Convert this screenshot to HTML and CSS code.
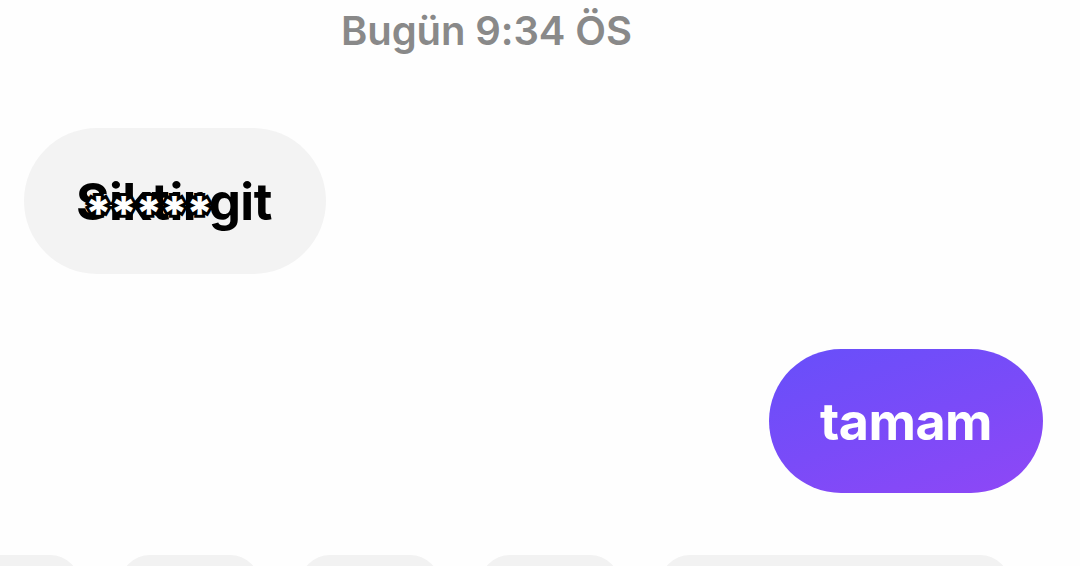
FILE: index.html
```html
<!DOCTYPE html>
<html lang="tr">
<head>
<meta charset="utf-8">
<link rel="stylesheet" href="styles.css">
</head>
<body>
<div class="chat">
  <div class="stamp">Bugün 9:34 ÖS</div>
  <div class="row row-in">
    <div class="bubble in">
      <span class="censor-wrap"><span class="orig">Siktir git</span><span class="stars">*****</span></span>
    </div>
  </div>
  <div class="row row-out">
    <div class="bubble out">tamam</div>
  </div>
  <div class="chips">
    <div class="chip c1"></div>
    <div class="chip c2"></div>
    <div class="chip c3"></div>
    <div class="chip c4"></div>
    <div class="chip c5"></div>
  </div>
</div>
</body>
</html>
```
FILE: styles.css
```css
html, body {
  margin: 0;
  padding: 0;
  background: #fefefe;
  width: 1080px;
  height: 566px;
  overflow: hidden;
}
.chat {
  display: flex;
  flex-direction: column;
  font-family: Inter, "Noto Sans", sans-serif;
  height: 566px;
  overflow: hidden;
}
.stamp {
  padding-left: 341px;
  margin-top: 7px;
  font-size: 40px;
  font-weight: 600;
  color: #898989;
  line-height: 48px;
  letter-spacing: -0.1px;
}
.row {
  display: flex;
  flex: none;
}
.row-in {
  margin-top: 73px;
  padding-left: 24px;
}
.row-out {
  margin-top: 75px;
  justify-content: flex-end;
  padding-right: 37px;
}
.bubble {
  height: 146px;
  border-radius: 73px;
  display: flex;
  align-items: center;
  font-size: 52px;
  font-weight: 700;
  letter-spacing: -0.5px;
}
.in {
  background: #f3f3f3;
  color: #000;
  width: 302px;
  box-sizing: border-box;
  padding-left: 52px;
  font-size: 51px;
  word-spacing: -6px;
}
.out {
  height: 144px;
  border-radius: 72px;
  width: 274px;
  justify-content: center;
  color: #fff;
  background: linear-gradient(160deg, #674ffa 0%, #7a4bf8 50%, #8f47f6 100%);
}
.censor-wrap {
  position: relative;
  white-space: pre;
}
.stars {
  position: absolute;
  left: 9px;
  top: 14px;
  color: #fff;
  font-size: 46px;
  font-weight: 800;
  letter-spacing: -1.5px;
  word-spacing: 0;
  -webkit-text-stroke: 6px #000;
  paint-order: stroke fill;
}
.chips {
  flex: none;
  height: 11px;
  overflow: hidden;
  margin-top: 62px;
  display: flex;
  gap: 40px;
  margin-left: -70px;
}
.chip {
  flex: none;
  height: 60px;
  border-radius: 30px;
  background: #f2f2f2;
}
.c1 { width: 150px; }
.c2 { width: 140px; }
.c3 { width: 140px; }
.c4 { width: 140px; }
.c5 { width: 350px; }
```
